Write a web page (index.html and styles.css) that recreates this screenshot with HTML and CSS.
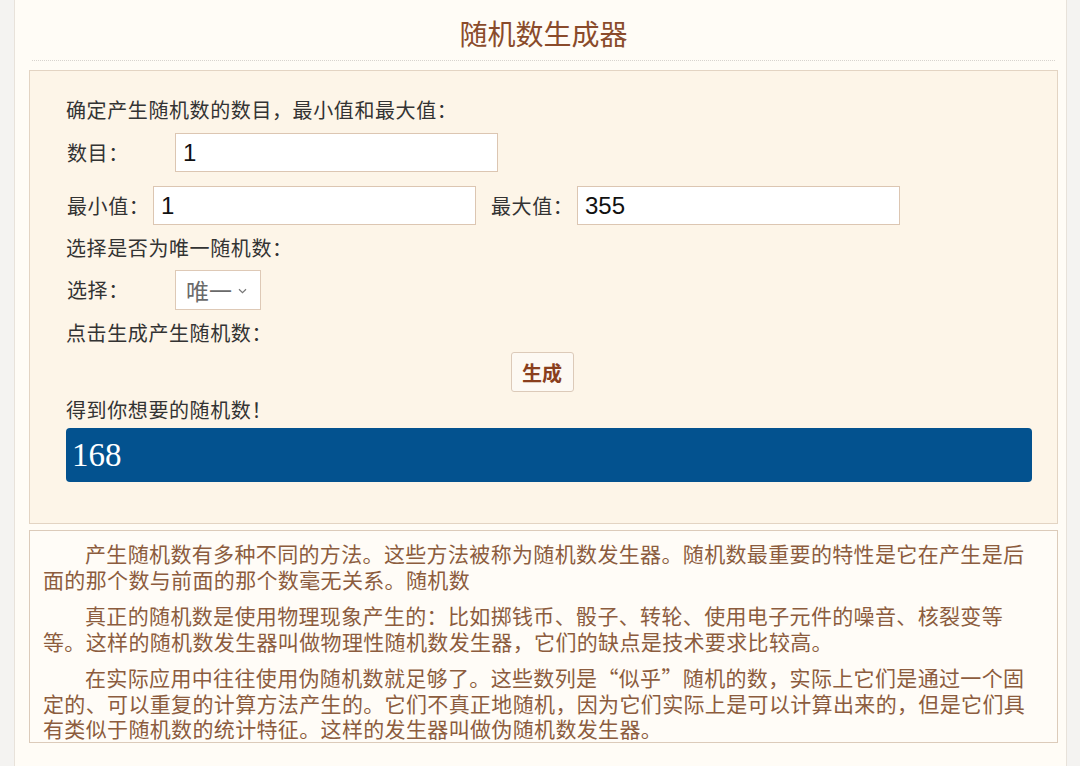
FILE: index.html
```html
<!DOCTYPE html>
<html lang="zh-CN">
<head>
<meta charset="utf-8">
<title>随机数生成器</title>
<link rel="stylesheet" href="styles.css">
</head>
<body>
<div class="frame">
  <h1 class="page-title">随机数生成器</h1>

  <section class="tool">
    <p class="line intro">确定产生随机数的数目，最小值和最大值：</p>

    <div class="row row-count">
      <label class="lbl lbl-wide">数目：</label>
      <input class="field" type="text" value="1">
    </div>

    <div class="row row-range">
      <label class="lbl">最小值：</label>
      <input class="field" type="text" value="1">
      <label class="lbl lbl-max">最大值：</label>
      <input class="field" type="text" value="355">
    </div>

    <p class="line gap-s">选择是否为唯一随机数：</p>

    <div class="row row-select">
      <label class="lbl lbl-wide">选择：</label>
      <div class="select">
        <span class="select-text">唯一</span>
        <svg class="chev" width="9" height="6" viewBox="0 0 9 6"><path d="M1 1.2 L4.5 4.6 L8 1.2" fill="none" stroke="#777" stroke-width="1.2"/></svg>
      </div>
    </div>

    <p class="line gap-s">点击生成产生随机数：</p>

    <div class="btn-row">
      <button class="btn" type="button">生成</button>
    </div>

    <p class="line gap-xs">得到你想要的随机数！</p>

    <div class="result">168</div>
  </section>

  <section class="about">
    <p>产生随机数有多种不同的方法。这些方法被称为随机数发生器。随机数最重要的特性是它在产生是后面的那个数与前面的那个数毫无关系。随机数</p>
    <p>真正的随机数是使用物理现象产生的：比如掷钱币、骰子、转轮、使用电子元件的噪音、核裂变等等。这样的随机数发生器叫做物理性随机数发生器，它们的缺点是技术要求比较高。</p>
    <p>在实际应用中往往使用伪随机数就足够了。这些数列是“似乎”随机的数，实际上它们是通过一个固定的、可以重复的计算方法产生的。它们不真正地随机，因为它们实际上是可以计算出来的，但是它们具有类似于随机数的统计特征。这样的发生器叫做伪随机数发生器。</p>
  </section>
</div>
</body>
</html>
```

FILE: styles.css
```css
html, body {
  margin: 0;
  padding: 0;
}

body {
  background: #f4f3f1;
  font-family: "Noto Sans CJK SC", "Noto Sans", sans-serif;
}

.frame {
  margin: 0 13px 0 14px;
  min-height: 766px;
  box-sizing: border-box;
  background: #fffcf6;
  border-left: 1px solid #e8e2da;
  border-right: 1px solid #e8e2da;
  padding: 0 8px 0 14px;
  overflow: hidden;
}

.page-title {
  margin: 0 3px 9px;
  padding: 13px 0 7px;
  border-bottom: 1px dotted #d8d4cf;
  text-align: center;
  font-size: 28px;
  line-height: 40px;
  font-weight: normal;
  color: #8a4b2b;
}

/* generator form */
.tool {
  background: #fdf5e8;
  border: 1px solid #e3d4c3;
  padding: 24px 25px 41px 36px;
}

.line {
  margin: 0;
  font-size: 20px;
  line-height: 30px;
  letter-spacing: 0.6px;
  color: #333;
}

.gap-s { margin-top: 8px; }
.gap-xs { margin-top: 3px; }

.row {
  display: flex;
  align-items: center;
}

.row-count { margin-top: 8px; }
.row-range { margin-top: 14px; }
.row-select { margin-top: 7px; }

.lbl {
  font-size: 20px;
  line-height: 30px;
  letter-spacing: 0.6px;
  color: #333;
  width: 86px;
  flex: none;
  padding-left: 1px;
}

.lbl-wide { width: 108px; }
.lbl-max { margin-left: 14px; }

.field {
  box-sizing: border-box;
  width: 323px;
  height: 39px;
  border: 1px solid #dcc6b2;
  background: #fff;
  padding: 0 7px;
  font-family: "Liberation Sans", Arial, sans-serif;
  font-size: 24px;
  color: #111;
  outline: none;
}

.select {
  box-sizing: border-box;
  width: 86px;
  height: 40px;
  border: 1px solid #dec9b6;
  background: #fff;
  display: flex;
  align-items: center;
  padding: 0 8px 0 10px;
  gap: 6px;
}

.select-text {
  font-size: 23px;
  color: #6a6a6a;
  line-height: 1;
}

.chev { flex: none; margin-top: 2px; }

.btn-row {
  display: flex;
  justify-content: center;
  margin-top: 4px;
  padding-right: 14px;
}

.btn {
  box-sizing: border-box;
  width: 63px;
  height: 40px;
  border: 1px solid #dccab9;
  border-radius: 3px;
  background: #fdf9f3;
  color: #8a3f1c;
  font-family: "Noto Sans CJK SC", sans-serif;
  font-size: 20px;
  font-weight: bold;
  padding: 0;
}

.result {
  margin-top: 3px;
  height: 54px;
  background: #03528f;
  border-radius: 4px;
  color: #fff;
  font-family: "Liberation Serif", "Times New Roman", serif;
  font-size: 33px;
  line-height: 54px;
  padding-left: 6px;
}

/* description text */
.about {
  margin-top: 6px;
  background: #fffcf7;
  border: 1px solid #dccbba;
  padding: 10px 20px 0 13px;
}

.about p {
  margin: 0 0 11px;
  font-size: 21px;
  letter-spacing: 0.35px;
  line-height: 25.5px;
  text-indent: 2em;
  color: #8c5c3e;
}

.about p:last-child { margin-bottom: 0; }
```
